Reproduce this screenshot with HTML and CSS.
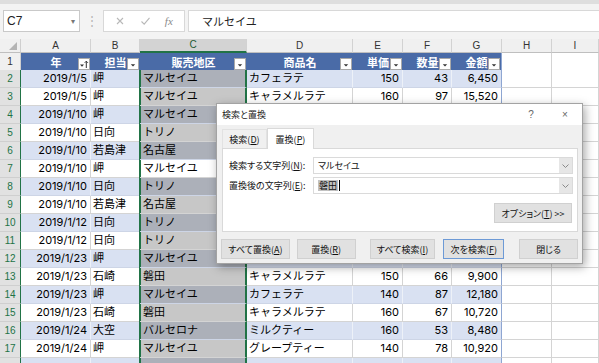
FILE: index.html
```html
<!DOCTYPE html>
<html lang="ja">
<head>
  <meta charset="UTF-8">
  <title>検索と置換</title>
  <link rel="stylesheet" href="styles.css">
</head>
<body>
<div class="formula-bar">
  <div class="name-box"><span>C7</span><span class="name-arrow">▾</span></div>
  <div class="grip">⋮</div>
  <div class="fx-box">
    <svg width="10" height="10" viewBox="0 0 10 10"><path d="M2 2L8 8M8 2L2 8" stroke="#b8b8b8" stroke-width="1.1" fill="none"/></svg>
    <svg width="11" height="10" viewBox="0 0 11 10"><path d="M1.5 5.5L4.2 8.2L9.5 1.8" stroke="#b8b8b8" stroke-width="1.1" fill="none"/></svg>
    <span class="fx">fx</span>
  </div>
  <div class="formula-input">マルセイユ</div>
</div>

<div class="sheet">
  <div class="row col-heads">
    <div class="corner"><svg width="10" height="10" viewBox="0 0 10 10"><path d="M9 1V9H1Z" fill="#b4b4b4"/></svg></div>
    <div class="ch">A</div><div class="ch">B</div><div class="ch sel-col">C</div><div class="ch">D</div>
    <div class="ch">E</div><div class="ch">F</div><div class="ch">G</div><div class="ch">H</div><div class="ch">I</div>
  </div>

  <div class="row head-row">
    <div class="rh plain">1</div>
    <div class="hd"><span></span><span>年</span>
      <span class="filter"><svg width="10" height="10" viewBox="0 0 10 10"><path d="M1 5.5H5L3 7.8Z" fill="#333"/><path d="M7.3 9V2.2M5.7 3.8L7.3 2.2L8.9 3.8" stroke="#333" stroke-width="1" fill="none"/></svg></span></div>
    <div class="hd"><span></span><span>担当</span><span class="filter"><svg width="10" height="10" viewBox="0 0 10 10"><path d="M2.8 5.2H7.2L5 7.6Z" fill="#333"/></svg></span></div>
    <div class="hd"><span></span><span>販売地区</span><span class="filter"><svg width="10" height="10" viewBox="0 0 10 10"><path d="M2.8 5.2H7.2L5 7.6Z" fill="#333"/></svg></span></div>
    <div class="hd"><span></span><span>商品名</span><span class="filter"><svg width="10" height="10" viewBox="0 0 10 10"><path d="M2.8 5.2H7.2L5 7.6Z" fill="#333"/></svg></span></div>
    <div class="hd"><span></span><span>単価</span><span class="filter"><svg width="10" height="10" viewBox="0 0 10 10"><path d="M2.8 5.2H7.2L5 7.6Z" fill="#333"/></svg></span></div>
    <div class="hd"><span></span><span>数量</span><span class="filter"><svg width="10" height="10" viewBox="0 0 10 10"><path d="M2.8 5.2H7.2L5 7.6Z" fill="#333"/></svg></span></div>
    <div class="hd last"><span></span><span>金額</span><span class="filter"><svg width="10" height="10" viewBox="0 0 10 10"><path d="M2.8 5.2H7.2L5 7.6Z" fill="#333"/></svg></span></div>
    <div class="c"></div><div class="c"></div>
  </div>

  <div class="row band">
    <div class="rh">2</div><div class="c num">2019/1/5</div><div class="c">岬</div><div class="c sel">マルセイユ</div><div class="c">カフェラテ</div><div class="c num">150</div><div class="c num">43</div><div class="c num last">6,450</div><div class="c out"></div><div class="c out"></div>
  </div>
  <div class="row">
    <div class="rh">3</div><div class="c num">2019/1/5</div><div class="c">岬</div><div class="c sel">マルセイユ</div><div class="c">キャラメルラテ</div><div class="c num">160</div><div class="c num">97</div><div class="c num last">15,520</div><div class="c out"></div><div class="c out"></div>
  </div>
  <!-- rows 4-12: columns D-G sit under the dialog -->
  <div class="row band">
    <div class="rh">4</div><div class="c num">2019/1/10</div><div class="c">岬</div><div class="c sel">マルセイユ</div><div class="c"></div><div class="c num"></div><div class="c num"></div><div class="c num last"></div><div class="c out"></div><div class="c out"></div>
  </div>
  <div class="row">
    <div class="rh">5</div><div class="c num">2019/1/10</div><div class="c">日向</div><div class="c sel">トリノ</div><div class="c"></div><div class="c num"></div><div class="c num"></div><div class="c num last"></div><div class="c out"></div><div class="c out"></div>
  </div>
  <div class="row band">
    <div class="rh">6</div><div class="c num">2019/1/10</div><div class="c">若島津</div><div class="c sel">名古屋</div><div class="c"></div><div class="c num"></div><div class="c num"></div><div class="c num last"></div><div class="c out"></div><div class="c out"></div>
  </div>
  <div class="row">
    <div class="rh">7</div><div class="c num">2019/1/10</div><div class="c">岬</div><div class="c sel active">マルセイユ</div><div class="c"></div><div class="c num"></div><div class="c num"></div><div class="c num last"></div><div class="c out"></div><div class="c out"></div>
  </div>
  <div class="row band">
    <div class="rh">8</div><div class="c num">2019/1/10</div><div class="c">日向</div><div class="c sel">トリノ</div><div class="c"></div><div class="c num"></div><div class="c num"></div><div class="c num last"></div><div class="c out"></div><div class="c out"></div>
  </div>
  <div class="row">
    <div class="rh">9</div><div class="c num">2019/1/10</div><div class="c">若島津</div><div class="c sel">名古屋</div><div class="c"></div><div class="c num"></div><div class="c num"></div><div class="c num last"></div><div class="c out"></div><div class="c out"></div>
  </div>
  <div class="row band">
    <div class="rh">10</div><div class="c num">2019/1/12</div><div class="c">日向</div><div class="c sel">トリノ</div><div class="c"></div><div class="c num"></div><div class="c num"></div><div class="c num last"></div><div class="c out"></div><div class="c out"></div>
  </div>
  <div class="row">
    <div class="rh">11</div><div class="c num">2019/1/12</div><div class="c">日向</div><div class="c sel">トリノ</div><div class="c"></div><div class="c num"></div><div class="c num"></div><div class="c num last"></div><div class="c out"></div><div class="c out"></div>
  </div>
  <div class="row band">
    <div class="rh">12</div><div class="c num">2019/1/23</div><div class="c">岬</div><div class="c sel">マルセイユ</div><div class="c"></div><div class="c num"></div><div class="c num"></div><div class="c num last"></div><div class="c out"></div><div class="c out"></div>
  </div>
  <div class="row">
    <div class="rh">13</div><div class="c num">2019/1/23</div><div class="c">石崎</div><div class="c sel">磐田</div><div class="c">キャラメルラテ</div><div class="c num">150</div><div class="c num">66</div><div class="c num last">9,900</div><div class="c out"></div><div class="c out"></div>
  </div>
  <div class="row band">
    <div class="rh">14</div><div class="c num">2019/1/23</div><div class="c">岬</div><div class="c sel">マルセイユ</div><div class="c">カフェラテ</div><div class="c num">140</div><div class="c num">87</div><div class="c num last">12,180</div><div class="c out"></div><div class="c out"></div>
  </div>
  <div class="row">
    <div class="rh">15</div><div class="c num">2019/1/23</div><div class="c">石崎</div><div class="c sel">磐田</div><div class="c">キャラメルラテ</div><div class="c num">160</div><div class="c num">67</div><div class="c num last">10,720</div><div class="c out"></div><div class="c out"></div>
  </div>
  <div class="row band">
    <div class="rh">16</div><div class="c num">2019/1/24</div><div class="c">大空</div><div class="c sel">バルセロナ</div><div class="c">ミルクティー</div><div class="c num">160</div><div class="c num">53</div><div class="c num last">8,480</div><div class="c out"></div><div class="c out"></div>
  </div>
  <div class="row">
    <div class="rh">17</div><div class="c num">2019/1/24</div><div class="c">岬</div><div class="c sel">マルセイユ</div><div class="c">グレープティー</div><div class="c num">140</div><div class="c num">78</div><div class="c num last">10,920</div><div class="c out"></div><div class="c out"></div>
  </div>
  <div class="row band">
    <div class="rh"></div><div class="c num"></div><div class="c"></div><div class="c sel"></div><div class="c"></div><div class="c num"></div><div class="c num"></div><div class="c num last"></div><div class="c out"></div><div class="c out"></div>
  </div>
</div>

<div class="dialog">
  <div class="dlg-title">
    <span class="dlg-name">検索と置換</span>
    <span class="dlg-ctrl">?</span>
    <span class="dlg-ctrl">×</span>
  </div>
  <div class="dlg-body">
    <div class="tabs">
      <div class="tab">検索(<u>D</u>)</div>
      <div class="tab on">置換(<u>P</u>)</div>
    </div>
    <div class="panel">
      <div class="field">
        <label>検索する文字列(<u>N</u>):</label>
        <div class="combo"><span class="val">マルセイユ</span><span class="drop"><svg width="9" height="6" viewBox="0 0 9 6"><path d="M1.5 1.5L4.5 4.5L7.5 1.5" stroke="#8a8a8a" fill="none"/></svg></span></div>
      </div>
      <div class="field">
        <label>置換後の文字列(<u>E</u>):</label>
        <div class="combo"><span class="val"><span class="hl">磐田</span><span class="caret"></span></span><span class="drop"><svg width="9" height="6" viewBox="0 0 9 6"><path d="M1.5 1.5L4.5 4.5L7.5 1.5" stroke="#8a8a8a" fill="none"/></svg></span></div>
      </div>
      <div class="opt-row">
        <button class="btn opt">オプション(<u>T</u>) &gt;&gt;</button>
      </div>
    </div>
    <div class="actions">
      <button class="btn w-all">すべて置換(<u>A</u>)</button>
      <button class="btn w-one">置換(<u>R</u>)</button>
      <button class="btn w-find">すべて検索(<u>I</u>)</button>
      <button class="btn w-next default">次を検索(<u>F</u>)</button>
      <button class="btn w-close">閉じる</button>
    </div>
  </div>
</div>
</body>
</html>
```

FILE: styles.css
```css
* {
  box-sizing: border-box;
}
html, body {
  margin: 0;
  padding: 0;
}
body {
  width: 599px;
  height: 363px;
  overflow: hidden;
  position: relative;
  background: #fff;
  color: #000;
  font-family: Inter, "Noto Sans CJK JP", sans-serif;
}

/* formula bar */
.formula-bar {
  height: 39px;
  background: #f3f3f3;
  border-top: 4px solid #dedede;
  padding: 6px 0 0 3px;
  display: flex;
  align-items: flex-start;
}
.name-box {
  width: 77px;
  height: 22px;
  background: #fff;
  border: 1px solid #c9c9c9;
  display: flex;
  align-items: center;
  justify-content: space-between;
  padding: 0 4px 0 3px;
  font-family: "Liberation Sans", sans-serif;
  font-size: 12px;
  color: #222;
}
.name-arrow {
  font-size: 8px;
  color: #777;
}
.grip {
  width: 23px;
  height: 22px;
  line-height: 22px;
  text-align: center;
  color: #b5b5b5;
  font-size: 12px;
}
.fx-box {
  width: 82px;
  height: 22px;
  background: #fff;
  border: 1px solid #d8d8d8;
  display: flex;
  align-items: center;
  justify-content: space-around;
  padding: 0 4px;
}
.fx {
  font-family: "Liberation Serif", serif;
  font-style: italic;
  font-size: 11px;
  color: #8a8a8a;
}
.formula-input {
  flex: 1;
  height: 22px;
  margin-left: 3px;
  background: #fff;
  border: 1px solid #d8d8d8;
  border-right: 0;
  padding-left: 13px;
  font-family: "Noto Sans CJK JP", sans-serif;
  font-size: 11px;
  line-height: 20px;
  color: #222;
}

/* sheet */
.row {
  display: grid;
  grid-template-columns: 21px 70px 49px 107px 106px 50px 49px 50px 50px 47px;
  height: 18px;
}
.col-heads {
  height: 14px;
}
.head-row {
  height: 17px;
}
.corner {
  background: #f0f0f0;
  border-right: 1px solid #cfcfcf;
  border-bottom: 1px solid #bfbfbf;
  display: flex;
  align-items: flex-end;
  justify-content: flex-end;
  padding: 0 2px 1px 0;
}
.ch {
  background: #f0f0f0;
  border-right: 1px solid #d2d2d2;
  border-bottom: 1px solid #bfbfbf;
  font-family: "Liberation Sans", sans-serif;
  font-size: 10px;
  line-height: 13px;
  text-align: center;
  color: #333;
}
.ch.sel-col {
  background: #d3d3d3;
  border-bottom: 2px solid #217346;
  color: #1d5a35;
  line-height: 12px;
}
.rh {
  background: #e1e1e1;
  border-right: 1px solid #217346;
  border-bottom: 1px solid #cfcfcf;
  font-family: "Liberation Sans", sans-serif;
  font-size: 10px;
  line-height: 17px;
  text-align: center;
  color: #217346;
}
.rh.plain {
  background: #f0f0f0;
  border-right-color: #cfcfcf;
  color: #333;
  line-height: 18px;
}

.hd {
  display: grid;
  grid-template-columns: 13px 1fr 13px;
  align-items: center;
  background: #4a6ba7;
  border-bottom: 1px solid #4a6ba7;
  color: #fff;
  font-family: "Noto Sans CJK JP", sans-serif;
  font-size: 11px;
  font-weight: bold;
  text-align: center;
  white-space: nowrap;
}
.hd.last {
  border-right: 1px solid #8ea6d2;
}
.filter {
  align-self: end;
  width: 12px;
  height: 12px;
  margin-bottom: 1px;
  background: #fff;
  border: 1px solid #a9a9a9;
  display: flex;
  align-items: center;
  justify-content: center;
}

.c {
  border-right: 1px solid #d4d4d4;
  border-bottom: 1px solid #d4d4d4;
  padding: 0 2px;
  font-size: 11px;
  line-height: 17px;
  white-space: nowrap;
  overflow: hidden;
}
.num {
  text-align: right;
  padding-right: 3px;
}
.band .c {
  background: #d9e1f2;
  border-right-color: #edf1f8;
  border-bottom-color: #cdd5e6;
}
.c.last {
  border-right-color: #8ea6d2;
}
.band .c.out,
.c.out {
  background: #fff;
  border-right-color: #d4d4d4;
  border-bottom-color: #d4d4d4;
}
.c.sel {
  background: #c7c7c7;
  border-right: 2px solid #217346;
  box-shadow: -1px 0 #217346, inset 1px 0 #217346;
  padding-left: 3px;
}
.band .c.sel {
  background: #acb0b9;
  border-right-color: #217346;
}
.c.sel.active {
  background: #fff;
}

/* find & replace dialog */
.dialog {
  position: absolute;
  left: 216px;
  top: 103px;
  width: 367px;
  height: 161px;
  background: #f0f0f0;
  border: 1px solid #a3a3a3;
  box-shadow: 2px 3px 9px rgba(0, 0, 0, .35);
  font-family: "Noto Sans CJK JP", sans-serif;
  font-size: 9px;
  font-feature-settings: "palt";
  color: #111;
}
.dlg-title {
  height: 21px;
  background: #fff;
  display: flex;
  align-items: center;
  padding-left: 5px;
}
.dlg-name {
  flex: 1;
  color: #222;
}
.dlg-ctrl {
  width: 34px;
  text-align: center;
  color: #666;
  font-family: "Liberation Sans", sans-serif;
  font-size: 10px;
}
.dlg-body {
  padding: 0 4px 0 5px;
}
.tabs {
  height: 23px;
  display: flex;
  align-items: flex-end;
}
.tab {
  width: 45px;
  height: 19px;
  padding-top: 2px;
  text-align: center;
  line-height: 15px;
  border: 1px solid #e2e2e2;
  border-bottom: 0;
}
.tab.on {
  width: 47px;
  height: 21px;
  padding-top: 3px;
  margin-bottom: -1px;
  position: relative;
  background: #fff;
  border-color: #d9d9d9;
}
.panel {
  height: 84px;
  background: #fff;
  border: 1px solid #d9d9d9;
  padding: 8px 4px 0 5px;
}
.field {
  display: flex;
  align-items: center;
  height: 17px;
}
.field + .field {
  margin-top: 3px;
}
.field label {
  width: 85px;
  flex: none;
  padding-left: 1px;
  white-space: nowrap;
}
.combo {
  width: 260px;
  height: 17px;
  border: 1px solid #dadada;
  display: flex;
  align-items: center;
}
.val {
  flex: 1;
  padding-left: 4px;
  display: flex;
  align-items: center;
}
.hl {
  background: #c2c2c2;
  padding: 0 1px;
  line-height: 11px;
}
.caret {
  width: 1px;
  height: 11px;
  margin-left: 1px;
  background: #000;
}
.drop {
  width: 13px;
  height: 15px;
  background: #e6e6e6;
  display: flex;
  align-items: center;
  justify-content: center;
}
.opt-row {
  margin-top: 9px;
  display: flex;
  justify-content: flex-end;
  padding-right: 1px;
}
.btn {
  height: 20px;
  padding: 0;
  background: #e1e1e1;
  border: 1px solid #d0d0d0;
  font: inherit;
  color: #111;
}
.btn.opt {
  width: 78px;
}
.actions {
  margin-top: 7px;
  display: flex;
}
.w-all {
  width: 69px;
  margin-left: -1px;
}
.w-one {
  width: 59px;
  margin-left: 7px;
}
.w-find {
  width: 66px;
  margin-left: 14px;
}
.w-next {
  width: 61px;
  margin-left: 8px;
}
.w-close {
  width: 59px;
  margin-left: 15px;
}
.btn.default {
  border-color: #6d9ad6;
}
```
